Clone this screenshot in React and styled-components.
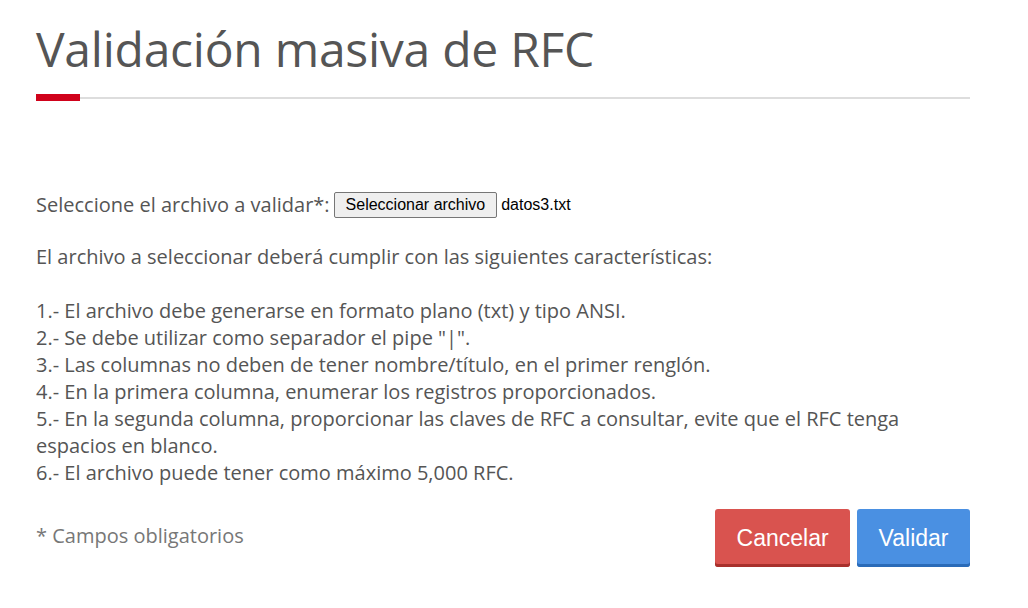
import React from 'react';
import styled, { createGlobalStyle } from 'styled-components';

const GlobalStyle = createGlobalStyle`
  body {
    margin: 0;
    background: #ffffff;
    font-family: 'Open Sans', 'Liberation Sans', sans-serif;
  }
`;

const Page = styled.div`
  width: 934px;
  padding: 17px 0 0 36px;
`;

const Title = styled.h1`
  margin: 0;
  font-family: 'Open Sans', sans-serif;
  font-weight: 400;
  font-size: 48px;
  line-height: 64px;
  letter-spacing: -0.25px;
  color: #555555;
`;

const Rule = styled.div`
  display: flex;
  align-items: center;
  margin-top: 13px;
  height: 7px;
`;

const RedMark = styled.div`
  width: 44px;
  height: 7px;
  background: #d0021b;
`;

const GrayLine = styled.div`
  flex: 1;
  height: 2px;
  background: #dddddd;
`;

const Body = styled.div`
  margin-top: 90px;
  font-size: 20px;
  line-height: 27px;
  color: #555555;
`;

const FileRow = styled.div`
  display: flex;
  align-items: center;
  gap: 4px;
`;

const FileButton = styled.button`
  font-family: 'Liberation Sans', Arial, sans-serif;
  font-size: 16px;
  height: 26px;
  padding: 0 11px;
  color: #000000;
  background: #efefef;
  border: 1px solid #767676;
  border-radius: 2px;
`;

const FileName = styled.span`
  font-family: 'Liberation Sans', Arial, sans-serif;
  font-size: 16px;
  color: #000000;
`;

const Rules = styled.p`
  margin: 25px 0 0;
`;

const Footer = styled.div`
  display: flex;
  align-items: center;
  justify-content: space-between;
  margin-top: 23px;
`;

const Note = styled.span`
  color: #777777;
  padding-bottom: 5px;
`;

const Actions = styled.div`
  display: flex;
  gap: 7px;
`;

const ActionButton = styled.button`
  font-family: 'Liberation Sans', Arial, sans-serif;
  font-size: 23px;
  color: #ffffff;
  height: 58px;
  padding: 0 21.5px;
  border: none;
  border-radius: 3px;
  background: ${({ $tone }) => ($tone === 'danger' ? '#d9534f' : '#4a90e2')};
  box-shadow: inset 0 -3px 0 ${({ $tone }) => ($tone === 'danger' ? '#a8302c' : '#2a6bb8')};
`;

const App = () => (
  <>
    <GlobalStyle />
    <Page>
      <Title>Validación masiva de RFC</Title>
      <Rule>
        <RedMark />
        <GrayLine />
      </Rule>
      <Body>
        <FileRow>
          <span>Seleccione el archivo a validar*:</span>
          <FileButton type="button">Seleccionar archivo</FileButton>
          <FileName>datos3.txt</FileName>
        </FileRow>
        <Rules>
          El archivo a seleccionar deberá cumplir con las siguientes características:
          <br />
          <br />
          1.- El archivo debe generarse en formato plano (txt) y tipo ANSI.
          <br />
          2.- Se debe utilizar como separador el pipe "|".
          <br />
          3.- Las columnas no deben de tener nombre/título, en el primer renglón.
          <br />
          4.- En la primera columna, enumerar los registros proporcionados.
          <br />
          5.- En la segunda columna, proporcionar las claves de RFC a consultar, evite que el RFC tenga
          espacios en blanco.
          <br />
          6.- El archivo puede tener como máximo 5,000 RFC.
        </Rules>
        <Footer>
          <Note>* Campos obligatorios</Note>
          <Actions>
            <ActionButton $tone="danger">Cancelar</ActionButton>
            <ActionButton $tone="primary">Validar</ActionButton>
          </Actions>
        </Footer>
      </Body>
    </Page>
  </>
);

export default App;
